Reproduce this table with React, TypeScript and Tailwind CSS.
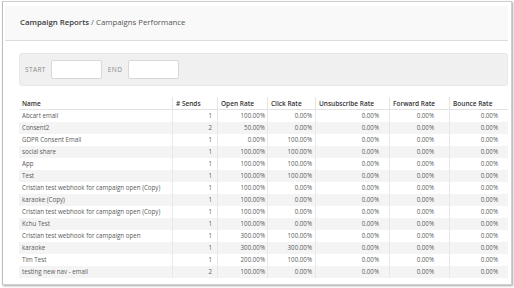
import React from "react";

const rows: [string, string, string, string, string, string, string][] = [
  ["Abcart email", "1", "100.00%", "0.00%", "0.00%", "0.00%", "0.00%"],
  ["Consent2", "2", "50.00%", "0.00%", "0.00%", "0.00%", "0.00%"],
  ["GDPR Consent Email", "1", "0.00%", "100.00%", "0.00%", "0.00%", "0.00%"],
  ["social share", "1", "100.00%", "100.00%", "0.00%", "0.00%", "0.00%"],
  ["App", "1", "100.00%", "100.00%", "0.00%", "0.00%", "0.00%"],
  ["Test", "1", "100.00%", "100.00%", "0.00%", "0.00%", "0.00%"],
  ["Cristian test webhook for campaign open (Copy)", "1", "100.00%", "0.00%", "0.00%", "0.00%", "0.00%"],
  ["karaoke (Copy)", "1", "100.00%", "0.00%", "0.00%", "0.00%", "0.00%"],
  ["Cristian test webhook for campaign open (Copy)", "1", "100.00%", "0.00%", "0.00%", "0.00%", "0.00%"],
  ["Kchu Test", "1", "100.00%", "0.00%", "0.00%", "0.00%", "0.00%"],
  ["Cristian test webhook for campaign open", "1", "300.00%", "100.00%", "0.00%", "0.00%", "0.00%"],
  ["karaoke", "1", "300.00%", "300.00%", "0.00%", "0.00%", "0.00%"],
  ["Tim Test", "1", "200.00%", "100.00%", "0.00%", "0.00%", "0.00%"],
  ["testing new nav - email", "2", "100.00%", "0.00%", "0.00%", "0.00%", "0.00%"],
];

const widths = ["w-[153px]", "w-[45px]", "w-[50px]", "w-[48px]", "w-[74px]", "w-[60px]", "w-[58px]"];
const rpad = ["", "pr-[5px]", "pr-[2px]", "pr-[3px]", "pr-[10px]", "pr-[15px]", "pr-[9px]"];
const headers = ["Name", "# Sends", "Open Rate", "Click Rate", "Unsubscribe Rate", "Forward Rate", "Bounce Rate"];

export default function App() {
  return (
    <div
      className="w-[514px] h-[288px] bg-white pt-[1px] pl-[2px]"
      style={{ fontFamily: '"Open Sans", "Noto Sans", sans-serif' }}
    >
      <div className="w-[510px] h-[284px] border border-[#cfcfcf] border-l-[#bdbdbd] shadow-[1px_1px_2px_rgba(0,0,0,0.35)] bg-white flex flex-col">
        <div className="mt-[4px] ml-[2px] mr-[3px] h-[35px] bg-[#f9f9f9] border-b border-[#dcdcdc] flex items-center pl-[15px] text-[7.8px] leading-none">
          <span className="font-semibold text-[#3a3a3a]">Campaign Reports</span>
          <span className="text-[#555] ml-[2px]">/ Campaigns Performance</span>
        </div>
        <div className="mt-[12px] ml-[16px] mr-[3px] h-[33px] bg-[#f0f0f0] rounded-[3px] border border-[#e8e8e8] flex items-center pl-[5px] text-[6.5px] text-[#8a8a8a] tracking-[0.4px]">
          <span>START</span>
          <div className="ml-[5px] w-[51px] h-[19px] bg-white border border-[#d8d8d8] rounded-[2px]" />
          <span className="ml-[6px]">END</span>
          <div className="ml-[6px] w-[51px] h-[19px] bg-white border border-[#d8d8d8] rounded-[2px]" />
        </div>
        <div className="mt-[11px] ml-[16px] mr-[3px] flex flex-col text-[6.2px] leading-none">
          <div className="flex h-[13px] border-b border-[#e2e2e2]">
            {headers.map((h, i) => (
              <div
                key={h}
                className={`${widths[i]} flex items-center pt-[2px] pl-[3px] font-semibold text-[6.5px] text-[#333] ${i > 0 ? "border-l border-[#e4e4e4]" : ""}`}
              >
                {h}
              </div>
            ))}
          </div>
          {rows.map((r, ri) => (
            <div key={ri} className={`flex h-[12px] ${ri % 2 === 1 ? "bg-[#f4f4f4]" : "bg-white"}`}>
              {r.map((c, ci) => (
                <div
                  key={ci}
                  className={`${widths[ci]} flex items-center text-[#5a5a5a] ${ci === 0 ? "pl-[3px] justify-start" : `justify-end ${rpad[ci]} border-l border-[#e8e8e8]`}`}
                >
                  {c}
                </div>
              ))}
            </div>
          ))}
        </div>
      </div>
    </div>
  );
}
